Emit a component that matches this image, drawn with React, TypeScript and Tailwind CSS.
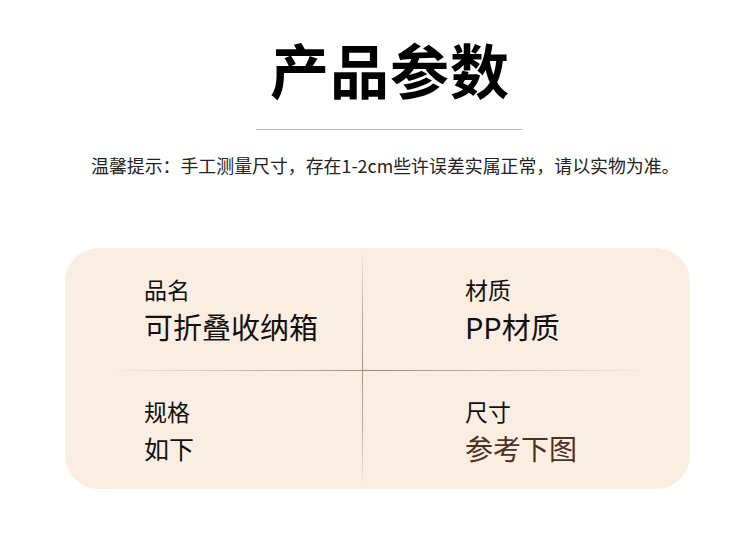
const font = { fontFamily: '"Noto Sans CJK SC", "Noto Sans", sans-serif' }

function Cell({ label, value, valueClass }: { label: string; value: string; valueClass?: string }) {
  return (
    <div className="flex flex-col">
      <p className="text-[23px] leading-[30px] text-[#111]">{label}</p>
      <p className={`leading-[36px] mt-[4px] ${valueClass ?? 'text-[29px] text-[#111]'}`}>{value}</p>
    </div>
  )
}

export default function App() {
  return (
    <div className="w-[750px] h-[560px] bg-white overflow-hidden" style={font}>
      {/* Title */}
      <div className="flex flex-col items-center pl-[30px] pt-[34px]">
        <h1 className="text-[59px] leading-[70px] font-bold text-black tracking-[1px]">产品参数</h1>
        <div className="w-[266px] h-px bg-[#b8b8b8] mt-[25px] mr-[2px]" />
      </div>

      {/* Tip */}
      <p className="pl-[91px] mt-[23px] text-[17.9px] leading-[24px] text-[#222] whitespace-nowrap">
        温馨提示：手工测量尺寸，存在1-2cm些许误差实属正常，请以实物为准。
      </p>

      {/* Card */}
      <div className="ml-[65px] mt-[71px] w-[625px] h-[241px] rounded-[34px] bg-[#faeee3] flex flex-col overflow-hidden">
        <div className="flex h-[122px]">
          <div className="w-[297px] pl-[79px] pt-[26px]">
            <Cell label="品名" value="可折叠收纳箱" />
          </div>
          <div className="w-px bg-gradient-to-b from-transparent via-[#bfae9f] to-[#a8968a]" />
          <div className="flex-1 pl-[102px] pt-[26px]">
            <Cell label="材质" value="PP材质" />
          </div>
        </div>
        <div className="h-px mx-[40px] bg-gradient-to-r from-transparent via-[#9d8979] to-transparent" />
        <div className="flex flex-1">
          <div className="w-[297px] pl-[79px] pt-[25px]">
            <Cell label="规格" value="如下" valueClass="text-[25px] text-[#111]" />
          </div>
          <div className="w-px bg-gradient-to-b from-[#a8968a] via-[#bfae9f] to-transparent" />
          <div className="flex-1 pl-[102px] pt-[25px]">
            <Cell label="尺寸" value="参考下图" valueClass="text-[28px] text-[#4a3222]" />
          </div>
        </div>
      </div>
    </div>
  )
}
